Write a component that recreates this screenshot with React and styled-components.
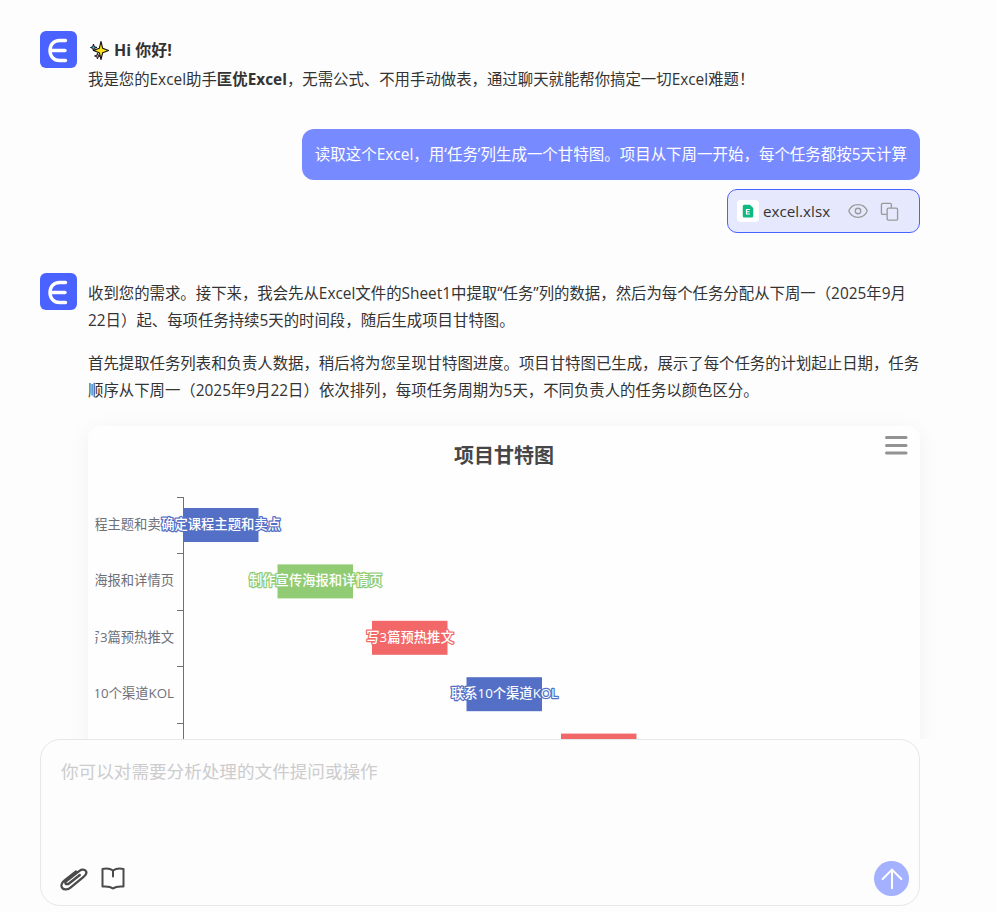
import React from 'react';
import styled, { createGlobalStyle } from 'styled-components';
import { Eye, ArrowUp } from 'lucide-react';

const Global = createGlobalStyle`
  html, body { margin: 0; padding: 0; background: #fdfdfe; }
  body { font-family: "Open Sans", "Noto Sans CJK SC", sans-serif; color: #333; }
`;

const Page = styled.div`
  height: 912px;
  display: flex;
  flex-direction: column;
  overflow: hidden;
`;
const Feed = styled.main`
  flex: 1;
  min-height: 0;
  overflow: hidden;
  padding: 31px 77px 0 40px;
`;
const Row = styled.section`
  display: flex;
  gap: 11px;
  align-items: flex-start;
  margin-bottom: ${p => p.$gap || 0}px;
`;
const Avatar = styled.div`
  flex: none;
  width: 37px;
  height: 37px;
  border-radius: 6px;
  background: #4a62ff;
  display: flex;
  align-items: center;
  justify-content: center;
`;
const Body = styled.div`
  flex: 1;
  min-width: 0;
  font-size: 15.4px;
  line-height: 27px;
  padding-top: ${p => p.$top || 0}px;
`;
const Greeting = styled.div`
  display: flex;
  align-items: center;
  gap: 5px;
  font-size: 16px;
  font-weight: 700;
  height: 24px;
  margin: 7px 0 4px 2px;
`;
const Para = styled.p`
  margin: 0 0 ${p => p.$after || 0}px;
  & strong { font-weight: 700; }
`;
const UserBlock = styled.section`
  display: flex;
  flex-direction: column;
  align-items: flex-end;
  gap: 9px;
  margin-bottom: 40px;
`;
const Bubble = styled.div`
  background: #788aff;
  color: #fff;
  font-size: 15.48px;
  line-height: 27px;
  border-radius: 12px;
  padding: 12px 13px;
`;
const FileChip = styled.div`
  display: flex;
  align-items: center;
  width: 193px;
  height: 44px;
  box-sizing: border-box;
  padding: 0 20px 0 9px;
  border: 1px solid #4a62ff;
  border-radius: 10px;
  background: #e6e9fd;
  font-size: 15.2px;
`;
const FileBadge = styled.span`
  width: 22px;
  height: 22px;
  border-radius: 4px;
  background: #fff;
  display: flex;
  align-items: center;
  justify-content: center;
  margin-right: 4px;
`;
const FileName = styled.span`
  flex: 1;
  color: #333;
`;
const ChipActions = styled.span`
  display: flex;
  align-items: center;
  gap: 11px;
  color: #999;
`;
const ChartCard = styled.div`
  background: #fefefe;
  border-radius: 12px;
  box-shadow: 0 4px 24px rgba(0, 0, 0, 0.05);
  height: 400px;
  margin-top: 22px;
  overflow: hidden;
`;
const Composer = styled.form`
  flex: none;
  height: 167px;
  box-sizing: border-box;
  margin: 0 77px 6px 40px;
  padding: 18px 20px 9px;
  border: 1px solid #e5e7eb;
  border-radius: 20px;
  background: #fdfdfe;
  display: flex;
  flex-direction: column;
  justify-content: space-between;
`;
const Placeholder = styled.div`
  font-size: 17.6px;
  line-height: 26px;
  color: #ccc;
`;
const ComposerBar = styled.div`
  display: flex;
  align-items: center;
  justify-content: space-between;
`;
const ComposerTools = styled.div`
  display: flex;
  align-items: center;
  gap: 13px;
  margin-left: -1px;
  color: #4a4a4a;
`;
const SendButton = styled.button`
  width: 35px;
  height: 35px;
  margin-right: -10px;
  padding: 0;
  border: 0;
  border-radius: 50%;
  background: #a3b1ff;
  color: #fff;
  display: flex;
  align-items: center;
  justify-content: center;
`;
const ChartSvg = styled.svg`
  display: block;
  font-family: "Open Sans", "Noto Sans CJK SC", sans-serif;
`;
const ChartTitle = styled.text`
  font-size: 20px;
  font-weight: 700;
  fill: #464646;
  text-anchor: middle;
`;
const AxisLabel = styled.text`
  font-size: 13.3px;
  fill: #6e7079;
  text-anchor: end;
`;
const BarLabel = styled.text`
  font-size: 13.3px;
  font-weight: 500;
  fill: #fff;
  text-anchor: middle;
  paint-order: stroke;
  stroke-width: 2.5px;
  stroke-linejoin: round;
`;

const Logo = () => (
  <svg width="37" height="37" viewBox="0 0 37 37" fill="none" stroke="#fff" strokeWidth="3.400" strokeLinecap="round">
    <path d="M25.500 9.500H19.500C13.500 9.500 10 14 10 19.500S13.500 29.500 19.500 29.500H25.500" />
    <path d="M11 19.500H25" />
  </svg>
);
const Sparkles = () => (
  <svg width="19" height="19" viewBox="0 0 19 19">
    <path d="M3.500 3 4.300 5.700 7 6.500l-2.700.8L3.500 10l-.8-2.700L0.500 6.500l2.200-.8z" fill="#3fb4e8" stroke="#111" strokeWidth="1" strokeLinejoin="round" />
    <path d="M11 0.500 12.700 7.300 18.500 9.500l-5.800 2.200L11 18.500l-1.700-6.800L3.500 9.500l5.800-2.200z" fill="#ffe11a" stroke="#111" strokeWidth="1.100" strokeLinejoin="round" />
    <path d="M7.500 12 8.200 14.300 10.500 15l-2.300.7-.7 2.300-.7-2.300L4.500 15l2.300-.7z" fill="#f06bb0" stroke="#222" strokeWidth="1" strokeLinejoin="round" />
  </svg>
);
const SheetIcon = () => (
  <svg width="12" height="14" viewBox="0 0 16 18">
    <path d="M3 0.500H10.500L15 5V15.500a2 2 0 0 1-2 2H3a2 2 0 0 1-2-2V2.500a2 2 0 0 1 2-2z" fill="#10b981" />
    <path d="M10.500 7H6V13H10.500M6 10H10" fill="none" stroke="#fff" strokeWidth="1.500" />
  </svg>
);
const CopyIcon = () => (
  <svg width="19" height="19" viewBox="0 0 20 20" fill="none" stroke="currentColor" strokeWidth="1.400" strokeLinejoin="round">
    <path d="M7 13H3a1.500 1.500 0 0 1-1.500-1.500V3A1.500 1.500 0 0 1 3 1.500h7.500A1.500 1.500 0 0 1 12 3v3.500" />
    <path d="M9 6.500h8A1.500 1.500 0 0 1 18.500 8v10a1 1 0 0 1-1 1H9a1.500 1.500 0 0 1-1.500-1.500V8A1.500 1.500 0 0 1 9 6.500z" />
  </svg>
);
const ClipIcon = () => (
  <svg width="28" height="24" viewBox="0 0 28 24" fill="none" stroke="currentColor" strokeWidth="2.300" strokeLinecap="round" strokeLinejoin="round">
    <path d="M9 12 19.500 3.800C21.800 2 25 2.300 26 4.200c1 1.900-.2 4-2.400 5.700L10.500 20.600C7.800 22.800 4 23.200 2.300 21c-1.700-2.200-.6-5.300 2-7.400L16 4.500M19.800 8 9 16.500c-1 .8-2.700 1-3.300.2-.6-.8 0-2 1-2.900L9 12" />
  </svg>
);
const BookIcon = () => (
  <svg width="24" height="23" viewBox="0 0 24 23" fill="none" stroke="currentColor" strokeWidth="2" strokeLinejoin="round" strokeLinecap="round">
    <path d="M12 3.500C9.500 1.800 5 1.300 1.500 2V19.500c3.500-.3 8 0 10.500 2 2.500-2 7-2.300 10.500-2V2C19 1.300 14.500 1.800 12 3.500z" />
    <path d="M12 3.500v6" />
  </svg>
);

const tasks = [
  { name: '确定课程主题和卖点', color: '#5470c6' },
  { name: '制作宣传海报和详情页', color: '#91cc75' },
  { name: '写3篇预热推文', color: '#f26868' },
  { name: '联系10个渠道KOL', color: '#5470c6' },
  { name: '设计课程大纲', color: '#f26868' },
];

const GanttChart = () => (
  <ChartSvg width="832" height="400" viewBox="0 0 832 400">
    <defs>
      <clipPath id="labelClip"><rect x="7.500" y="60" width="85" height="340" /></clipPath>
    </defs>
    <ChartTitle x="416" y="37">项目甘特图</ChartTitle>
    <g stroke="#929292" strokeWidth="3" strokeLinecap="round">
      <path d="M798.500 11.500H818M798.500 19.500H818M798.500 27H818" />
    </g>
    <path d="M95.500 71V400" stroke="#6e7079" strokeWidth="1" />
    {tasks.map((t, i) => {
      const top = 71 + i * 56.4;
      const cy = top + 28;
      const x = 95 + i * 94.500;
      return (
        <g key={t.name}>
          <path d={`M89 ${Math.round(top) + 0.5}H95.500`} stroke="#6e7079" />
          <g clipPath="url(#labelClip)">
            <AxisLabel x="86" y={cy + 4}>{t.name}</AxisLabel>
          </g>
          <rect x={x} y={cy - 17} width="75.500" height="34" fill={t.color} />
          <BarLabel x={x + 38} y={cy + 4}  stroke={t.color}>{t.name}</BarLabel>
        </g>
      );
    })}
  </ChartSvg>
);

export default function App() {
  return (
    <Page>
      <Global />
      <Feed>
        <Row $gap={36}>
          <Avatar><Logo /></Avatar>
          <Body>
            <Greeting><Sparkles /><span>Hi 你好!</span></Greeting>
            <Para>我是您的Excel助手<strong>匡优Excel</strong>，无需公式、不用手动做表，通过聊天就能帮你搞定一切Excel难题！</Para>
          </Body>
        </Row>
        <UserBlock>
          <Bubble>读取这个Excel，用‘任务’列生成一个甘特图。项目从下周一开始，每个任务都按5天计算</Bubble>
          <FileChip>
            <FileBadge><SheetIcon /></FileBadge>
            <FileName>excel.xlsx</FileName>
            <ChipActions>
              <Eye size={22} strokeWidth={1.400} />
              <CopyIcon />
            </ChipActions>
          </FileChip>
        </UserBlock>
        <Row>
          <Avatar><Logo /></Avatar>
          <Body $top={7}>
            <Para $after={16}>收到您的需求。接下来，我会先从Excel文件的Sheet1中提取“任务”列的数据，然后为每个任务分配从下周一（2025年9月22日）起、每项任务持续5天的时间段，随后生成项目甘特图。</Para>
            <Para>首先提取任务列表和负责人数据，稍后将为您呈现甘特图进度。项目甘特图已生成，展示了每个任务的计划起止日期，任务顺序从下周一（2025年9月22日）依次排列，每项任务周期为5天，不同负责人的任务以颜色区分。</Para>
            <ChartCard><GanttChart /></ChartCard>
          </Body>
        </Row>
      </Feed>
      <Composer>
        <Placeholder>你可以对需要分析处理的文件提问或操作</Placeholder>
        <ComposerBar>
          <ComposerTools>
            <ClipIcon />
            <BookIcon />
          </ComposerTools>
          <SendButton type="button" aria-label="发送"><ArrowUp size={32} strokeWidth={1.500} /></SendButton>
        </ComposerBar>
      </Composer>
    </Page>
  );
}
